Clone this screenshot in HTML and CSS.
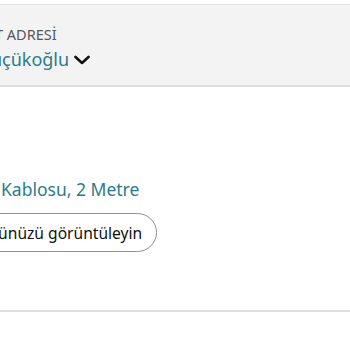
FILE: index.html
```html
<!DOCTYPE html>
<html lang="tr">
<head>
<meta charset="utf-8">
<link rel="stylesheet" href="styles.css">
</head>
<body>
<div class="page">
  <section class="address">
    <div class="label">TESLİMAT ADRESİ</div>
    <div class="name">Mehmet Küçükoğlu
      <svg class="chev" width="16" height="10" viewBox="0 0 16 10"><path d="M1.5 2 L8 8 L14.5 2" fill="none" stroke="#111" stroke-width="2.6" stroke-linecap="round" stroke-linejoin="round"/></svg>
    </div>
  </section>
  <section class="item">
    <a class="title">Hızlı Şarj USB-C Kablosu, 2 Metre</a>
    <button class="btn">Ürününüzü görüntüleyin</button>
  </section>
  <hr class="rule">
</div>
</body>
</html>
```
FILE: styles.css
```css
html, body { margin: 0; padding: 0; background: #fff; }
body { font-family: "Noto Sans", "Open Sans", sans-serif; overflow: hidden; width: 350px; height: 350px; }
.page { padding-top: 4px; }
.address {
  background: #f3f3f3;
  border-top: 1px solid #e3e3e3;
  border-bottom: 2px solid #dedede;
  height: 83px;
  box-sizing: border-box;
  padding-top: 20px;
}
.label { font-size: 14.5px; color: #565959; margin-left: -63px; white-space: nowrap; line-height: 18px; }
.name { font-size: 18px; color: #2a7c8c; margin-left: -96px; white-space: nowrap; line-height: 24px; margin-top: 4px; display: flex; align-items: center; gap: 5px; }
.chev { margin-top: 2px; }
.item { padding-top: 91px; }
.title { display: block; font-size: 17.5px; color: #2a7c8c; white-space: nowrap; margin-left: -129px; line-height: 22px; }
.btn {
  display: block;
  margin-top: 13px;
  margin-left: -60px;
  height: 39px;
  padding: 0 14px 0 20px;
  border: 1px solid #8d9096;
  border-radius: 20px;
  background: #fff;
  font-family: inherit;
  font-size: 15.6px;
  color: #0f1111;
  white-space: nowrap;
}
.rule { border: 0; border-top: 2px solid #e0e0e0; margin: 58px 0 0; }
```
